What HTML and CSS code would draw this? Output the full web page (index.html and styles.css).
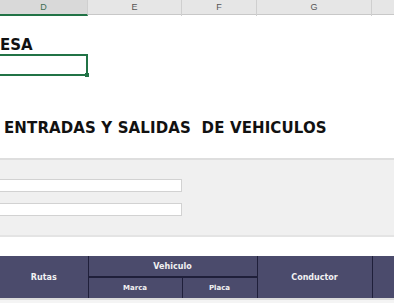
FILE: index.html
```html
<!DOCTYPE html>
<html lang="es">
<head>
    <meta charset="UTF-8">
    <title>Control de vehiculos</title>
    <link rel="stylesheet" href="styles.css">
</head>
<body>
    <div class="col-head">
        <div class="col active">D</div>
        <div class="col">E</div>
        <div class="col">F</div>
        <div class="col">G</div>
        <div class="col"></div>
    </div>

    <div class="sheet">
        <div class="company">ESA</div>
        <div class="sel-box"><span class="handle"></span></div>

        <h1 class="title">ENTRADAS Y SALIDAS&nbsp; DE VEHICULOS</h1>

        <div class="panel">
            <div class="field"></div>
            <div class="field"></div>
        </div>

        <table class="grid">
            <colgroup>
                <col class="c-rutas">
                <col class="c-marca">
                <col class="c-placa">
                <col class="c-cond">
                <col>
            </colgroup>
            <tr>
                <th rowspan="2">Rutas</th>
                <th colspan="2" class="top">Vehiculo</th>
                <th rowspan="2">Conductor</th>
                <th rowspan="2" class="last"></th>
            </tr>
            <tr>
                <th class="sub">Marca</th>
                <th class="sub">Placa</th>
            </tr>
        </table>
        <div class="foot"></div>
    </div>
</body>
</html>
```

FILE: styles.css
```css
* {
    margin: 0;
    padding: 0;
    box-sizing: border-box;
}

body {
    background: #ffffff;
    font-family: 'DejaVu Sans', Verdana, sans-serif;
    overflow: hidden;
    width: 394px;
    height: 303px;
}

.col-head {
    display: grid;
    grid-template-columns: 88px 94px 75px 115px 1fr;
    height: 15px;
    background: #e6e6e6;
    border-bottom: 1px solid #c8c8c8;
}

.col {
    font-family: 'Liberation Sans', Arial, sans-serif;
    font-size: 9px;
    color: #555;
    text-align: center;
    line-height: 14px;
    border-right: 1px solid #cfcfcf;
}

.col:last-child {
    border-right: none;
}

.col.active {
    background: #d9d9d9;
    border-bottom: 2px solid #217346;
    color: #3f6f54;
}

.company {
    font-size: 15px;
    font-weight: bold;
    color: #111;
    margin-top: 21px;
    height: 18px;
}

.sel-box {
    position: relative;
    width: 88px;
    height: 22px;
    border: 2px solid #217346;
    border-left: none;
}

.handle {
    position: absolute;
    right: -3px;
    bottom: -3px;
    width: 4px;
    height: 4px;
    background: #217346;
}

.title {
    font-size: 15px;
    font-weight: bold;
    letter-spacing: 0.12px;
    color: #111;
    margin: 43px 0 0 4px;
    height: 21px;
    white-space: nowrap;
}

.panel {
    margin-top: 18px;
    height: 79px;
    background: #f0f0f0;
    border-top: 2px solid #dedede;
    border-bottom: 2px solid #e4e4e4;
    padding-top: 19px;
    display: flex;
    flex-direction: column;
    gap: 11px;
}

.field {
    width: 182px;
    height: 13px;
    background: #fff;
    border: 1px solid #d2d2d2;
    border-left: none;
}

.grid {
    margin-top: 19px;
    border-collapse: collapse;
    width: 100%;
    table-layout: fixed;
}

.c-rutas {
    width: 88px;
}

.c-marca {
    width: 94px;
}

.c-placa {
    width: 75px;
}

.c-cond {
    width: 115px;
}

.grid th {
    background: #4b4b6c;
    color: #f2f2f2;
    font-size: 8px;
    font-weight: bold;
    border-right: 1px solid #1f1f3a;
}

.grid th.last {
    border-right: none;
}

.grid .top {
    height: 21px;
    border-bottom: 2px solid #1f1f3a;
}

.grid .sub {
    height: 21px;
    font-size: 7px;
}

.foot {
    height: 8px;
    background: #f4f4f4;
    border-top: 2px solid #dcdcdc;
}
```
